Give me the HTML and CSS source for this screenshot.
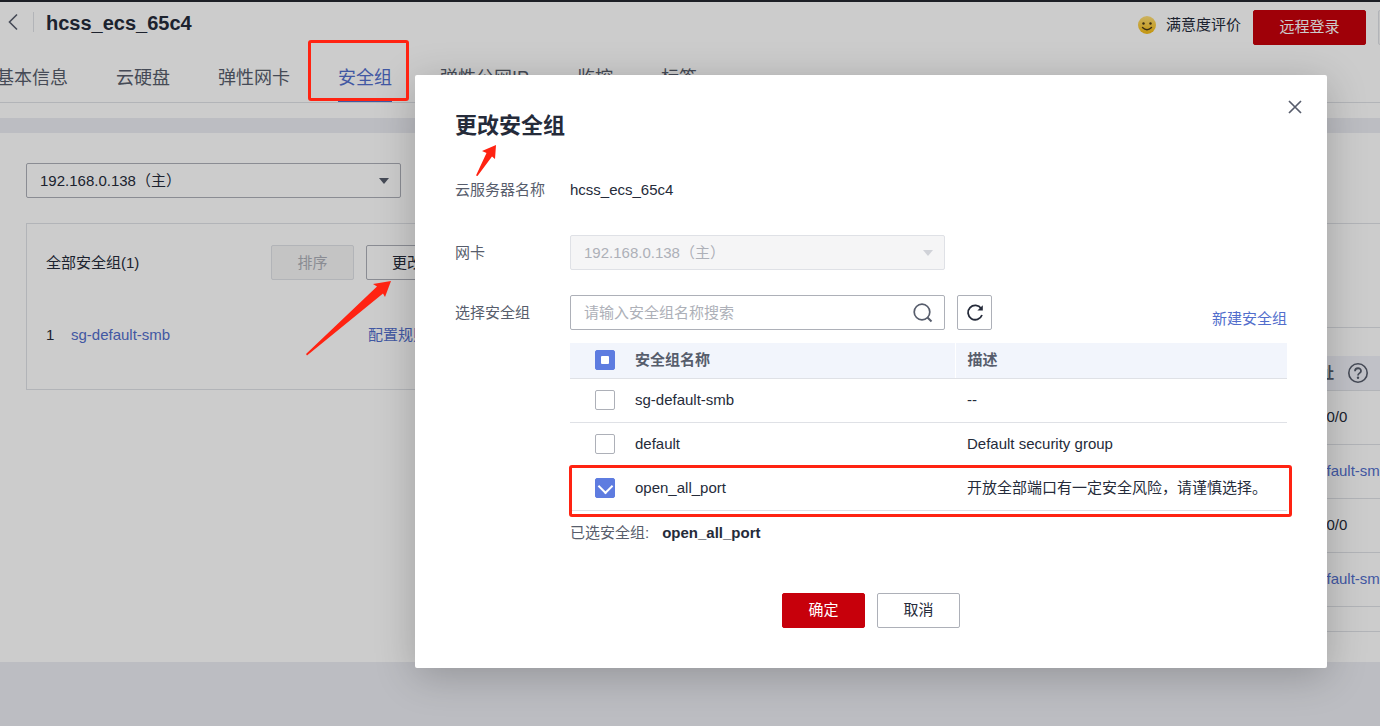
FILE: index.html
```html
<!DOCTYPE html>
<html lang="zh-CN">
<head>
<meta charset="utf-8">
<meta name="viewport" content="width=device-width, initial-scale=1">
<title>hcss_ecs_65c4</title>
<link rel="stylesheet" href="styles.css">
</head>
<body>
<div class="page">
  <header class="header">
    <div class="title-row">
      <button class="back" aria-label="返回">
        <svg width="10" height="18" viewBox="0 0 10 18"><path d="M9 1.500L1.500 9L9 16.500" fill="none" stroke="#575d6c" stroke-width="1.600"/></svg>
      </button>
      <h1 class="server-name">hcss_ecs_65c4</h1>
      <div class="actions">
        <a class="rating" href="#">
          <svg width="18" height="18" viewBox="0 0 18 18">
            <defs><linearGradient id="face" x1="0" y1="0" x2="0" y2="1"><stop offset="0" stop-color="#ffe07a"/><stop offset="1" stop-color="#f5bb12"/></linearGradient></defs>
            <circle cx="9" cy="9" r="9" fill="url(#face)"/>
            <circle cx="5.500" cy="7.500" r="1.200" fill="#4a3a18"/><circle cx="12.500" cy="7.500" r="1.200" fill="#4a3a18"/>
            <path d="M4.500 11.500Q9 16 13.500 11.500" fill="none" stroke="#4a3a18" stroke-width="1.400" stroke-linecap="round"/>
          </svg>
          <span>满意度评价</span>
        </a>
        <button class="btn btn-primary btn-login">远程登录</button>
        <button class="btn btn-disabled btn-more" aria-label="更多" disabled></button>
      </div>
    </div>
    <nav class="tabs">
      <a class="tab" href="#">基本信息</a>
      <a class="tab" href="#">云硬盘</a>
      <a class="tab" href="#">弹性网卡</a>
      <a class="tab tab-active" href="#">安全组</a>
      <a class="tab" href="#">弹性公网IP</a>
      <a class="tab" href="#">监控</a>
      <a class="tab" href="#">标签</a>
    </nav>
  </header>

  <main class="content">
    <section class="groups">
      <div class="select-box page-select">
        <select class="field" aria-label="网卡"><option>192.168.0.138（主）</option></select>
        <svg class="caret" width="10" height="6" viewBox="0 0 10 6"><path d="M0 0H10L5 6Z" fill="#575d6c"/></svg>
      </div>
      <div class="group-card">
        <div class="card-head">
          <span>全部安全组(1)</span>
          <div class="card-buttons">
            <button class="btn btn-disabled" disabled>排序</button>
            <button class="btn">更改安全组</button>
          </div>
        </div>
        <div class="group-row">
          <span>1</span>
          <a class="link" href="#">sg-default-smb</a>
          <a class="link" href="#">配置规则</a>
        </div>
      </div>
    </section>

    <section class="rules">
      <div class="rules-head"></div>
      <table class="rules-table">
        <thead><tr><th></th><th class="source"><span class="source-label">源地址
          <svg width="20" height="20" viewBox="0 0 20 20"><circle cx="10" cy="10" r="9.200" fill="none" stroke="#575d6c" stroke-width="1.600"/><path d="M7 8.200C7 4.300 13 4.300 13 8C13 10.300 10 10 10 12.600" fill="none" stroke="#575d6c" stroke-width="1.800"/><circle cx="10" cy="14.800" r="1.200" fill="#575d6c"/></svg></span></th></tr></thead>
        <tbody>
          <tr><td></td><td class="source">0.0.0.0/0</td></tr>
          <tr><td></td><td class="source"><a class="link" href="#">sg-default-smb</a></td></tr>
          <tr><td></td><td class="source">0.0.0.0/0</td></tr>
          <tr><td></td><td class="source"><a class="link" href="#">sg-default-smb</a></td></tr>
        </tbody>
      </table>
    </section>
  </main>

  <div class="mask"></div>

  <div class="dialog" role="dialog" aria-labelledby="dialog-title">
    <button class="close" aria-label="关闭">
      <svg width="14" height="14" viewBox="0 0 14 14"><path d="M1 1L13 13M13 1L1 13" stroke="#575d6c" stroke-width="1.700"/></svg>
    </button>
    <h2 class="dialog-title" id="dialog-title">更改安全组</h2>

    <div class="form">
      <span class="label">云服务器名称</span>
      <span class="value">hcss_ecs_65c4</span>

      <label class="label" for="nic">网卡</label>
      <div class="select-box">
        <select class="field" id="nic" disabled><option>192.168.0.138（主）</option></select>
        <svg class="caret" width="10" height="6" viewBox="0 0 10 6"><path d="M0 0H10L5 6Z" fill="#d0d2d8"/></svg>
      </div>

      <label class="label" for="search">选择安全组</label>
      <div class="search-row">
        <div class="select-box">
          <input class="field" id="search" type="text" placeholder="请输入安全组名称搜索">
          <svg class="search-icon" width="20" height="20" viewBox="0 0 20 20"><circle cx="9" cy="9" r="7.800" fill="none" stroke="#575d6c" stroke-width="1.700"/><path d="M14.500 14.500L18.500 18.500" stroke="#575d6c" stroke-width="2"/></svg>
        </div>
        <button class="refresh" aria-label="刷新">
          <svg width="18" height="18" viewBox="0 0 18 18"><path d="M15.200 4.500A7.200 7.200 0 1 0 16 11" fill="none" stroke="#252b3a" stroke-width="1.800"/><path d="M16.800 1.200V6.400H11.400Z" fill="#252b3a"/></svg>
        </button>
        <a class="link create" href="#">新建安全组</a>
      </div>
    </div>

    <div class="picker">
      <table class="group-table">
        <thead>
          <tr><th class="check"><input type="checkbox" class="box box-partial" aria-label="全选"></th><th class="name">安全组名称</th><th class="desc">描述</th></tr>
        </thead>
        <tbody>
          <tr><td class="check"><input type="checkbox" class="box" id="g1"></td><td><label for="g1">sg-default-smb</label></td><td class="desc">--</td></tr>
          <tr><td class="check"><input type="checkbox" class="box" id="g2"></td><td><label for="g2">default</label></td><td class="desc">Default security group</td></tr>
          <tr><td class="check"><input type="checkbox" class="box" id="g3" checked></td><td><label for="g3">open_all_port</label></td><td class="desc">开放全部端口有一定安全风险，请谨慎选择。</td></tr>
        </tbody>
      </table>
      <p class="selected"><span>已选安全组:</span><strong>open_all_port</strong></p>
    </div>

    <div class="dialog-buttons">
      <button class="btn btn-primary">确定</button>
      <button class="btn">取消</button>
    </div>
  </div>

  <div class="mark mark-tab"></div>
  <div class="mark mark-row"></div>
  <svg class="arrow arrow-change" width="90" height="78" viewBox="0 0 90 78"><path d="M86 1L68 4L72 6.500L1 74L2 75.500L78 13.500L80 17Z" fill="#ff2312"/></svg>
  <svg class="arrow arrow-title" width="24" height="34" viewBox="0 0 24 34"><path d="M21 1L7 7L11.500 9L1 31.500L2.500 32L17 12.500L20 15Z" fill="#ff2312"/></svg>
</div>
</body>
</html>
```

FILE: styles.css
```css
* { box-sizing: border-box; }

body {
  margin: 0;
  background: #ecedf3;
  color: #252b3a;
  font: 15px/20px "Liberation Sans", "Noto Sans CJK SC", sans-serif;
}

button, input, select { font: inherit; color: inherit; }
a { text-decoration: none; color: inherit; }
svg { display: block; flex: none; }
h1, h2, p { margin: 0; }

.page {
  position: relative;
  min-height: 100vh;
  overflow: hidden;
}

.link { color: #526ecc; }

/* Buttons */
.btn {
  min-width: 83px;
  height: 35px;
  padding: 0 25px;
  border: 1px solid #adb0b8;
  border-radius: 2px;
  background: #fff;
  white-space: nowrap;
}
.btn-primary { border-color: #c7000b; background: #c7000b; color: #fff; }
.btn-disabled { border-color: #dfe1e6; background: #f5f5f6; color: #adb0b8; }

/* Header */
.header {
  height: 118px;
  border-top: 2px solid #23272f;
  background: #fff;
}
.title-row {
  display: flex;
  align-items: center;
  height: 50px;
  padding-left: 8px;
}
.back {
  display: flex;
  align-items: center;
  width: 26px;
  height: 20px;
  margin-bottom: 10px;
  padding: 0;
  border: 0;
  border-right: 1px solid #dfe1e6;
  background: none;
}
.server-name {
  margin: 0 0 8px 12px;
  font-size: 20px;
  line-height: 24px;
}
.actions {
  display: flex;
  align-items: center;
  gap: 12px;
  margin: 0 -90px 0 auto;
}
.rating { display: flex; align-items: center; gap: 10px; margin-bottom: 4px; }
.btn-login { width: 113px; }
.btn-more { width: 92px; }

.tabs {
  display: flex;
  gap: 48px;
  height: 51px;
  padding-top: 12px;
  margin-left: -4px;
  border-bottom: 1px solid #dfe1e6;
  color: #575d6c;
  font-size: 18px;
  line-height: 28px;
}
.tab { height: 38px; white-space: nowrap; }
.tab-active { border-bottom: 2px solid #526ecc; color: #526ecc; }

/* Page body */
.content {
  display: flex;
  gap: 20px;
  margin-top: 15px;
  padding: 30px 0 30px 26px;
  background: #fff;
}
.groups { flex: none; width: 487px; }

.select-box { display: grid; align-items: center; width: 375px; }
.select-box > * { grid-area: 1 / 1; }
.field {
  width: 100%;
  height: 35px;
  padding: 0 13px;
  border: 1px solid #adb0b8;
  border-radius: 2px;
  background: #fff;
  appearance: none;
}
.field:disabled {
  border-color: #dfe1e6;
  background: #f5f5f6;
  color: #adb0b8;
  opacity: 1;
}
.field::placeholder { color: #adb0b8; opacity: 1; }
.caret { justify-self: end; margin-right: 12px; pointer-events: none; }
.search-icon { justify-self: end; margin-right: 12px; }

.group-card {
  margin-top: 25px;
  padding: 21px 19px 44px;
  border: 1px solid #dfe1e6;
}
.card-head { display: flex; align-items: center; justify-content: space-between; }
.card-buttons { display: flex; gap: 12px; }
.group-row {
  display: grid;
  grid-template-columns: 25px 297px auto;
  margin-top: 45px;
}

.rules {
  flex: 1;
  min-width: 0;
  margin-top: 60px;
  padding-bottom: 24px;
  border: 1px solid #dfe1e6;
  border-right: 0;
}
.rules-head { height: 104px; border-bottom: 1px solid #dfe1e6; }
.rules-table {
  width: 100%;
  margin-top: 28px;
  border-collapse: collapse;
  table-layout: fixed;
}
.rules-table th { height: 34px; background: #f0f2f9; color: #575d6c; }
.rules-table td { height: 54px; }
.rules-table th, .rules-table td {
  padding: 0;
  border-bottom: 1px solid #dfe1e6;
  text-align: left;
  white-space: nowrap;
}
.rules-table .source { width: 91px; }
.source-label { display: flex; align-items: center; gap: 14px; }

.mask { position: absolute; inset: 0; background: rgba(0, 0, 0, 0.2); }

/* Dialog */
.dialog {
  position: absolute;
  top: 75px;
  left: 415px;
  right: 53px;
  padding: 36px 40px 40px;
  border-radius: 2px;
  background: #fff;
  box-shadow: 0 8px 40px rgba(0, 0, 0, 0.22);
}
.close {
  position: absolute;
  top: 21px;
  right: 21px;
  padding: 4px;
  border: 0;
  background: none;
}
.dialog-title { font-size: 22px; line-height: 30px; }

.form {
  display: grid;
  grid-template-columns: 115px 1fr;
  align-items: center;
  row-gap: 25px;
  margin-top: 39px;
}
.label { color: #575d6c; }
.value { padding-bottom: 10px; }
.form > .label:first-child { padding-bottom: 10px; }
.search-row { display: flex; gap: 12px; }
.refresh {
  display: grid;
  place-items: center;
  width: 35px;
  height: 35px;
  padding: 0;
  border: 1px solid #adb0b8;
  border-radius: 2px;
  background: #fff;
}
.create { align-self: flex-end; margin: 0 0 1px auto; }

.picker { margin: 13px 0 0 115px; }
.group-table { width: 100%; border-collapse: collapse; table-layout: fixed; }
.group-table th, .group-table td {
  height: 44px;
  padding: 0;
  border-bottom: 1px solid #dfe1e6;
  text-align: left;
}
.group-table th { height: 35px; background: #f2f5fc; color: #575d6c; }
.group-table .check { width: 65px; padding-left: 25px; }
.group-table .name { width: 320px; border-right: 1px solid #fff; }
.group-table .desc { padding-left: 12px; }

.box {
  display: grid;
  place-items: center;
  width: 20px;
  height: 20px;
  margin: 0;
  border: 1px solid #adb0b8;
  border-radius: 2px;
  background: #fff;
  appearance: none;
}
.box:checked, .box-partial { border-color: #5e7ce0; background: #5e7ce0; }
.box-partial::before { content: ""; width: 8px; height: 8px; border-radius: 1px; background: #fff; }
.box:checked::before {
  content: "";
  width: 9px;
  height: 9px;
  margin-bottom: 4px;
  border: solid #fff;
  border-width: 0 2px 2px 0;
  transform: rotate(45deg);
}

.selected { display: flex; gap: 13px; margin-top: 12px; }
.selected span { color: #575d6c; }
.dialog-buttons { display: flex; justify-content: center; gap: 12px; margin-top: 50px; }

/* Annotations */
.mark { position: absolute; border: 3px solid #ff2312; border-radius: 3px; }
.mark-tab { top: 40px; left: 308px; width: 101px; height: 61px; }
.mark-row { top: 465px; left: 569px; right: 88px; height: 52px; }
.arrow { position: absolute; }
.arrow-change { top: 280px; left: 305px; }
.arrow-title { top: 144px; left: 475px; }
```
